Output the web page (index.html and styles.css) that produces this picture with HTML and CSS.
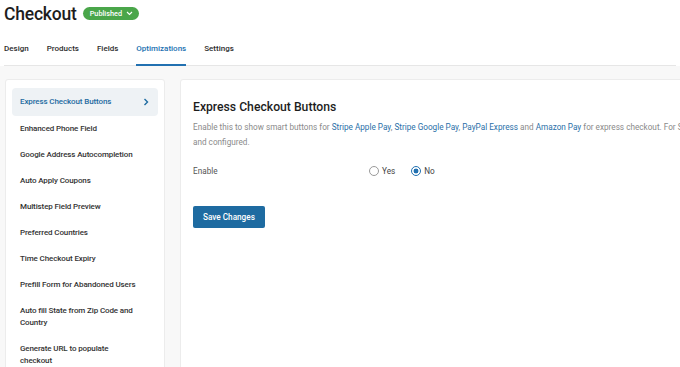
FILE: index.html
```html
<!DOCTYPE html>
<html lang="en">
<head>
  <meta charset="UTF-8">
  <meta name="viewport" content="width=device-width, initial-scale=1.0">
  <title>Checkout</title>
  <link rel="stylesheet" href="styles.css">
</head>
<body>
  <header class="top">
    <div class="title-row">
      <h1>Checkout</h1>
      <span class="badge">Published
        <svg width="7" height="5" viewBox="0 0 7 5"><path d="M1 1l2.5 2.5L6 1" fill="none" stroke="#fff" stroke-width="1.1"/></svg>
      </span>
    </div>
    <nav class="tabs">
      <a class="tab">Design</a>
      <a class="tab">Products</a>
      <a class="tab">Fields</a>
      <a class="tab active">Optimizations</a>
      <a class="tab">Settings</a>
    </nav>
  </header>

  <main class="layout">
    <aside class="side">
      <a class="item current">Express Checkout Buttons
        <svg width="6" height="8" viewBox="0 0 6 8"><path d="M1.5 1l3 3-3 3" fill="none" stroke="#1e6ba1" stroke-width="1.4"/></svg>
      </a>
      <a class="item">Enhanced Phone Field</a>
      <a class="item">Google Address Autocompletion</a>
      <a class="item">Auto Apply Coupons</a>
      <a class="item">Multistep Field Preview</a>
      <a class="item">Preferred Countries</a>
      <a class="item">Time Checkout Expiry</a>
      <a class="item">Prefill Form for Abandoned Users</a>
      <a class="item">Auto fill State from Zip Code and Country</a>
      <a class="item">Generate URL to populate checkout</a>
    </aside>

    <section class="panel">
      <h2>Express Checkout Buttons</h2>
      <p class="desc">Enable this to show smart buttons for <a>Stripe Apple Pay</a>, <a>Stripe Google Pay</a>, <a>PayPal Express</a> and <a>Amazon Pay</a> for express checkout. For Stripe and PayPal, the gateway must be installed<br>and configured.</p>

      <div class="field">
        <span class="label">Enable</span>
        <label class="radio"><span class="dot"></span>Yes</label>
        <label class="radio"><span class="dot on"></span>No</label>
      </div>

      <button class="save">Save Changes</button>
    </section>
  </main>
</body>
</html>
```

FILE: styles.css
```css
html, body {
  margin: 0;
  height: 100%;
  overflow: hidden;
}

body {
  background-color: #f8f8f8;
  font-family: Roboto, 'Open Sans', sans-serif;
  color: #2c2c2c;
}

a {
  cursor: pointer;
}

.top {
  background-color: #fff;
  padding: 0 4px;
}

.title-row {
  display: flex;
  align-items: center;
  gap: 6px;
  height: 31px;
  margin-top: -2px;
}

h1 {
  margin: 0;
  font-size: 17.5px;
  font-weight: 500;
  letter-spacing: -0.2px;
  color: #1d1d1d;
}

.badge {
  display: inline-flex;
  align-items: center;
  gap: 4px;
  height: 13px;
  padding: 0 6px 0 7px;
  border-radius: 7px;
  background-color: #4aa64a;
  color: #fff;
  font-size: 7.3px;
  font-weight: 500;
}

.tabs {
  display: flex;
  gap: 18px;
  height: 36px;
  border-bottom: 1px solid #e6e6e6;
}

.tab {
  display: flex;
  align-items: center;
  padding-top: 4px;
  font-size: 8px;
  font-weight: 500;
  color: #2c2c2c;
  border-bottom: 2px solid transparent;
  margin-bottom: -1px;
}

.tab.active {
  color: #2271b1;
  border-bottom-color: #2271b1;
}

.layout {
  display: flex;
  gap: 15px;
  padding: 13px 0 0 5px;
}

.side {
  flex: 0 0 160px;
  box-sizing: border-box;
  background-color: #fff;
  border: 1px solid #ececec;
  border-radius: 3px;
  padding: 8px 6px 0;
  display: flex;
  flex-direction: column;
  height: 320px;
}

.item {
  display: flex;
  align-items: center;
  justify-content: space-between;
  padding: 6.5px 20px 6.5px 8px;
  min-height: 13px;
  font-size: 8px;
  font-weight: 500;
  letter-spacing: -0.12px;
  line-height: 12.5px;
  color: #333;
}

.item.current {
  background-color: #eef2f5;
  border-radius: 4px;
  color: #1e6ba1;
  padding: 7px 9px 7px 8px;
  min-height: 14px;
}

.panel {
  flex: 0 0 640px;
  background-color: #fff;
  border: 1px solid #ececec;
  border-radius: 3px;
  padding: 20px 12px 0;
  height: 320px;
}

h2 {
  margin: 0 0 6px;
  font-size: 12.2px;
  font-weight: 500;
  color: #1d1d1d;
}

.desc {
  margin: 0;
  white-space: nowrap;
  font-size: 8.2px;
  line-height: 15px;
  color: #8a8a8a;
}

.desc a {
  color: #2a6fa8;
}

.field {
  display: flex;
  align-items: center;
  margin-top: 14px;
  height: 14px;
  font-size: 8.2px;
  color: #555;
}

.label {
  width: 176px;
}

.radio {
  display: flex;
  align-items: center;
  gap: 3px;
  margin-right: 16px;
  color: #444;
}

.dot {
  box-sizing: border-box;
  width: 10px;
  height: 10px;
  border: 1px solid #9a9a9a;
  border-radius: 50%;
  background-color: #fff;
}

.dot.on {
  border-color: #2271b1;
  background: radial-gradient(circle, #2271b1 0 2.2px, #fff 2.7px);
}

.save {
  display: block;
  margin-top: 28px;
  height: 22px;
  padding: 0 10px;
  border: 0;
  border-radius: 2px;
  background-color: #1e6ba1;
  color: #fff;
  font-family: inherit;
  font-size: 8.2px;
  font-weight: 500;
}
```
